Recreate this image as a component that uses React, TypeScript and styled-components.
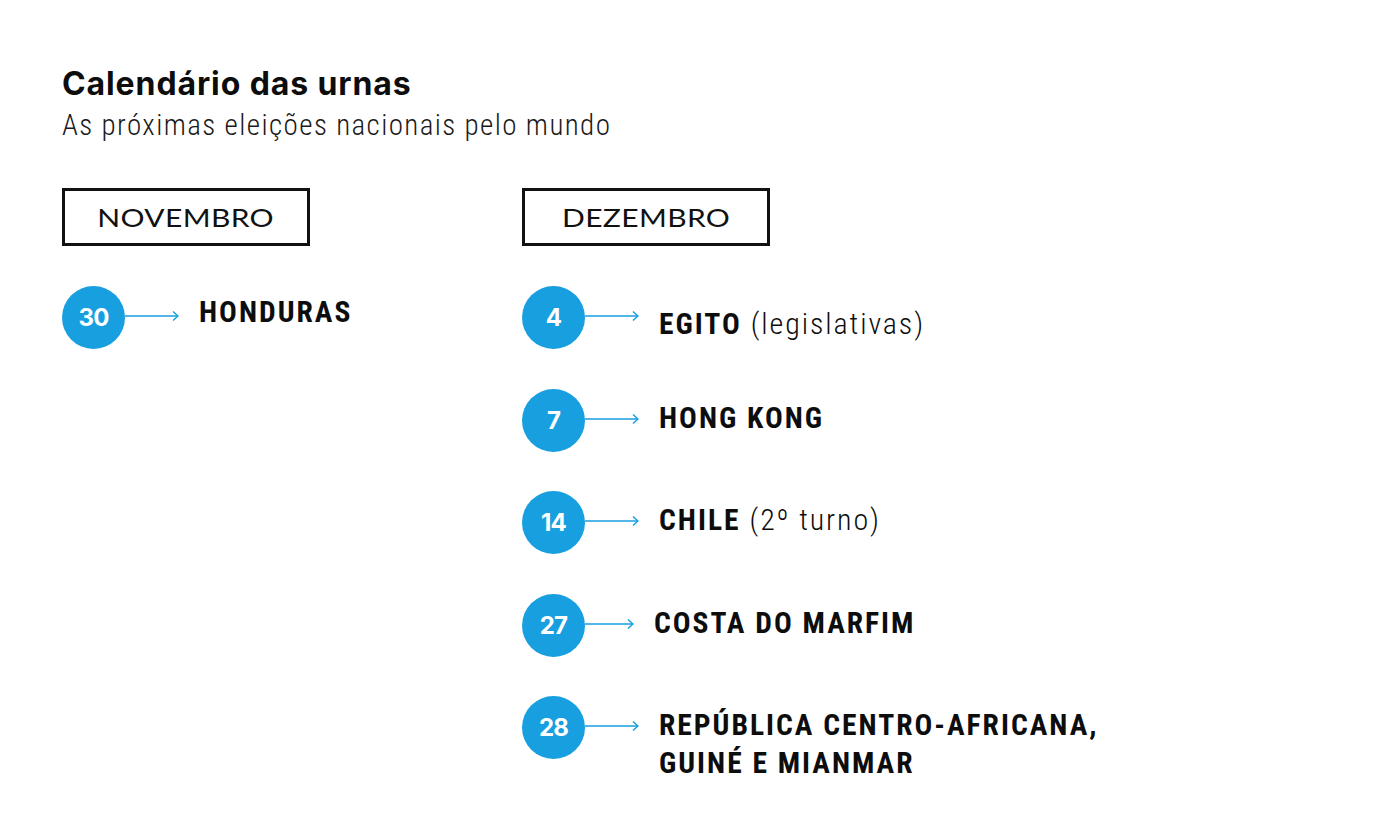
import styled, { createGlobalStyle } from 'styled-components'

const GlobalStyle = createGlobalStyle`
  body {
    margin: 0;
    background: #ffffff;
    color: #111111;
    font-family: 'Roboto', 'Liberation Sans', sans-serif;
  }
`

const BLUE = '#189fe0'

const Page = styled.div`
  width: 1380px;
  height: 840px;
  box-sizing: border-box;
  padding: 64px 0 0 62px;
`

const Title = styled.h1`
  margin: 0;
  font-family: 'Inter', 'Roboto', sans-serif;
  font-weight: 700;
  font-size: 32px;
  line-height: 40px;
  letter-spacing: 0.9px;
  color: #0d0d0d;
`

const Subtitle = styled.p`
  margin: 3px 0 0;
  font-family: 'Roboto Condensed', 'DejaVu Sans Condensed', sans-serif;
  font-weight: 300;
  font-size: 29px;
  line-height: 36px;
  letter-spacing: 1.4px;
  color: #1a1a1a;
`

const Columns = styled.div`
  display: grid;
  grid-template-columns: 460px 1fr;
  margin-top: 45px;
`

const Column = styled.section`
  display: flex;
  flex-direction: column;
`

const MonthBox = styled.div`
  width: 248px;
  height: 58px;
  box-sizing: border-box;
  border: 3px solid #111;
  display: flex;
  align-items: center;
  justify-content: center;
  margin-bottom: 40px;
`

const MonthLabel = styled.span`
  display: inline-block;
  font-family: 'Lato', 'Open Sans', sans-serif;
  font-size: 25px;
  letter-spacing: 0.3px;
  color: #111;
  transform: scaleX(1.2);
`

const List = styled.ul`
  list-style: none;
  margin: 0;
  padding: 0;
  display: flex;
  flex-direction: column;
  gap: 39.5px;
`

const Row = styled.li`
  display: flex;
  align-items: flex-start;
`

const Badge = styled.div`
  width: 63px;
  height: 63px;
  border-radius: 50%;
  background: ${BLUE};
  color: #fff;
  flex: none;
  display: flex;
  align-items: center;
  justify-content: center;
  font-family: 'Inter', 'Roboto', sans-serif;
  font-weight: 700;
  font-size: 24px;
  letter-spacing: -0.8px;
`

const Arrow = styled.svg`
  flex: none;
  margin-top: 24px;
`

const Name = styled.div<{ $gap: number; $shift: number }>`
  margin-left: ${p => p.$gap}px;
  margin-top: ${p => 10 + p.$shift}px;
  font-family: 'Roboto Condensed', 'DejaVu Sans Condensed', sans-serif;
  font-weight: 700;
  font-size: 29.5px;
  line-height: 38px;
  letter-spacing: 2px;
  color: #0d0d0d;
`

const Note = styled.span`
  font-size: 30px;
  font-weight: 300;
  letter-spacing: 1.9px;
  margin-left: 9px;
`

type Entry = {
  day: string
  name: string[]
  note?: string
  arrow?: number
  gap?: number
  shift?: number
}

const november: Entry[] = [{ day: '30', name: ['HONDURAS'], shift: -3 }]

const december: Entry[] = [
  { day: '4', name: ['EGITO'], note: '(legislativas)', shift: 9 },
  { day: '7', name: ['HONG KONG'] },
  { day: '14', name: ['CHILE'], note: '(2º turno)' },
  { day: '27', name: ['COSTA DO MARFIM'], arrow: 49, gap: 20 },
  { day: '28', name: ['REPÚBLICA CENTRO-AFRICANA,', 'GUINÉ E MIANMAR'] },
]

function ArrowIcon({ width }: { width: number }) {
  return (
    <Arrow width={width} height={12} viewBox={`0 0 ${width} 12`}>
      <line x1="0" y1="6" x2={width - 1} y2="6" stroke={BLUE} strokeWidth="1.5" />
      <polyline
        points={`${width - 6},1.5 ${width - 1},6 ${width - 6},10.5`}
        fill="none"
        stroke={BLUE}
        strokeWidth="1.5"
      />
    </Arrow>
  )
}

function Election({ entry }: { entry: Entry }) {
  return (
    <Row>
      <Badge>{entry.day}</Badge>
      <ArrowIcon width={entry.arrow ?? 54} />
      <Name $gap={entry.gap ?? 20} $shift={entry.shift ?? 0}>
        {entry.name.map((line, i) => (
          <div key={i}>
            {line}
            {entry.note && i === entry.name.length - 1 && <Note>{entry.note}</Note>}
          </div>
        ))}
      </Name>
    </Row>
  )
}

export default function App() {
  return (
    <>
      <GlobalStyle />
      <Page>
        <Title>Calendário das urnas</Title>
        <Subtitle>As próximas eleições nacionais pelo mundo</Subtitle>
        <Columns>
          <Column>
            <MonthBox>
              <MonthLabel>NOVEMBRO</MonthLabel>
            </MonthBox>
            <List>
              {november.map(e => (
                <Election key={e.day} entry={e} />
              ))}
            </List>
          </Column>
          <Column>
            <MonthBox>
              <MonthLabel>DEZEMBRO</MonthLabel>
            </MonthBox>
            <List>
              {december.map(e => (
                <Election key={e.day} entry={e} />
              ))}
            </List>
          </Column>
        </Columns>
      </Page>
    </>
  )
}
